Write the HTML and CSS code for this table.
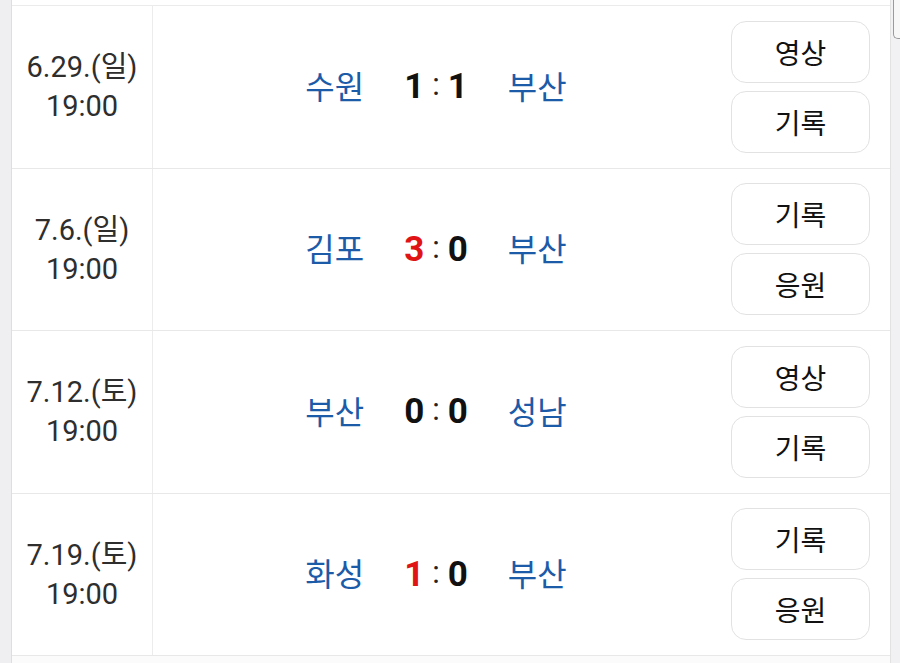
FILE: index.html
```html
<!DOCTYPE html>
<html lang="ko">
<head>
<meta charset="utf-8">
<link rel="stylesheet" href="styles.css">
</head>
<body>
<div class="page">
  <div class="gutter"></div>
  <div class="table">
    <div class="row-partial"></div>

    <div class="row">
      <div class="date">6.29.(일)<br>19:00</div>
      <div class="match">
        <span class="team">수원</span>
        <span class="score"><b class="num">1</b><span class="colon">:</span><b class="num">1</b></span>
        <span class="team">부산</span>
      </div>
      <div class="actions">
        <div class="btn">영상</div>
        <div class="btn">기록</div>
      </div>
    </div>

    <div class="row">
      <div class="date">7.6.(일)<br>19:00</div>
      <div class="match">
        <span class="team">김포</span>
        <span class="score"><b class="num win">3</b><span class="colon">:</span><b class="num">0</b></span>
        <span class="team">부산</span>
      </div>
      <div class="actions">
        <div class="btn">기록</div>
        <div class="btn">응원</div>
      </div>
    </div>

    <div class="row">
      <div class="date">7.12.(토)<br>19:00</div>
      <div class="match">
        <span class="team">부산</span>
        <span class="score"><b class="num">0</b><span class="colon">:</span><b class="num">0</b></span>
        <span class="team">성남</span>
      </div>
      <div class="actions">
        <div class="btn">영상</div>
        <div class="btn">기록</div>
      </div>
    </div>

    <div class="row">
      <div class="date">7.19.(토)<br>19:00</div>
      <div class="match">
        <span class="team">화성</span>
        <span class="score"><b class="num win">1</b><span class="colon">:</span><b class="num">0</b></span>
        <span class="team">부산</span>
      </div>
      <div class="actions">
        <div class="btn">기록</div>
        <div class="btn">응원</div>
      </div>
    </div>

    <div class="row-rest"></div>
  </div>
  <div class="scrollbar"><div class="thumb"></div></div>
</div>
</body>
</html>
```

FILE: styles.css
```css
html, body {
  margin: 0;
  padding: 0;
  height: 100%;
  overflow: hidden;
}
body {
  background: #f0f0f2;
  font-family: Roboto, "Noto Sans CJK KR", sans-serif;
}
.page {
  display: flex;
  height: 663px;
}
.gutter {
  width: 11px;
  background: #efeff1;
  border-right: 1px solid #dedee0;
}
.table {
  flex: 1;
  background: #ffffff;
  display: flex;
  flex-direction: column;
}
.row-partial {
  height: 5px;
  border-bottom: 1px solid #ebebeb;
}
.row {
  height: 161.5px;
  border-bottom: 1px solid #e8e8e8;
  display: flex;
}
.row-rest {
  flex: 1;
  background: #fbfbfb;
}
.date {
  width: 140px;
  border-right: 1px solid #ececec;
  display: flex;
  align-items: center;
  justify-content: center;
  text-align: center;
  font-size: 29px;
  line-height: 39px;
  color: #2e2e2e;
  padding-top: 1px;
}
.match {
  flex: 1;
  display: flex;
  align-items: center;
  justify-content: center;
  gap: 40px;
  padding-right: 2px;
}
.team {
  font-family: "Noto Sans CJK KR", sans-serif;
  font-size: 32px;
  color: #1c5ba8;
  line-height: 1;
  margin-top: -4px;
}
.score {
  display: flex;
  align-items: center;
  gap: 8px;
}
.num {
  font-family: Roboto, sans-serif;
  font-weight: 700;
  font-size: 35px;
  color: #111111;
  line-height: 1;
}
.num.win {
  color: #e01414;
}
.colon {
  font-family: Roboto, sans-serif;
  font-size: 31px;
  color: #222222;
  line-height: 1;
  margin-top: -4px;
}
.actions {
  width: 169px;
  display: flex;
  flex-direction: column;
  justify-content: center;
  gap: 8px;
  padding-left: 10px;
  box-sizing: border-box;
}
.btn {
  width: 139px;
  height: 62px;
  box-sizing: border-box;
  border: 1px solid #e2e2e2;
  border-radius: 15px;
  display: flex;
  align-items: center;
  justify-content: center;
  font-family: "Noto Sans CJK KR", sans-serif;
  font-size: 28px;
  color: #111111;
  background: #ffffff;
}
.scrollbar {
  width: 10px;
  background: #f1f1f3;
  border-left: 1px solid #e2e2e2;
  box-sizing: border-box;
}
.thumb {
  margin-left: 2px;
  height: 38px;
  border: 1px solid #9a9a9c;
  border-top: none;
  border-right: none;
  border-radius: 0 0 0 5px;
  background: #f7f7f8;
}
```
